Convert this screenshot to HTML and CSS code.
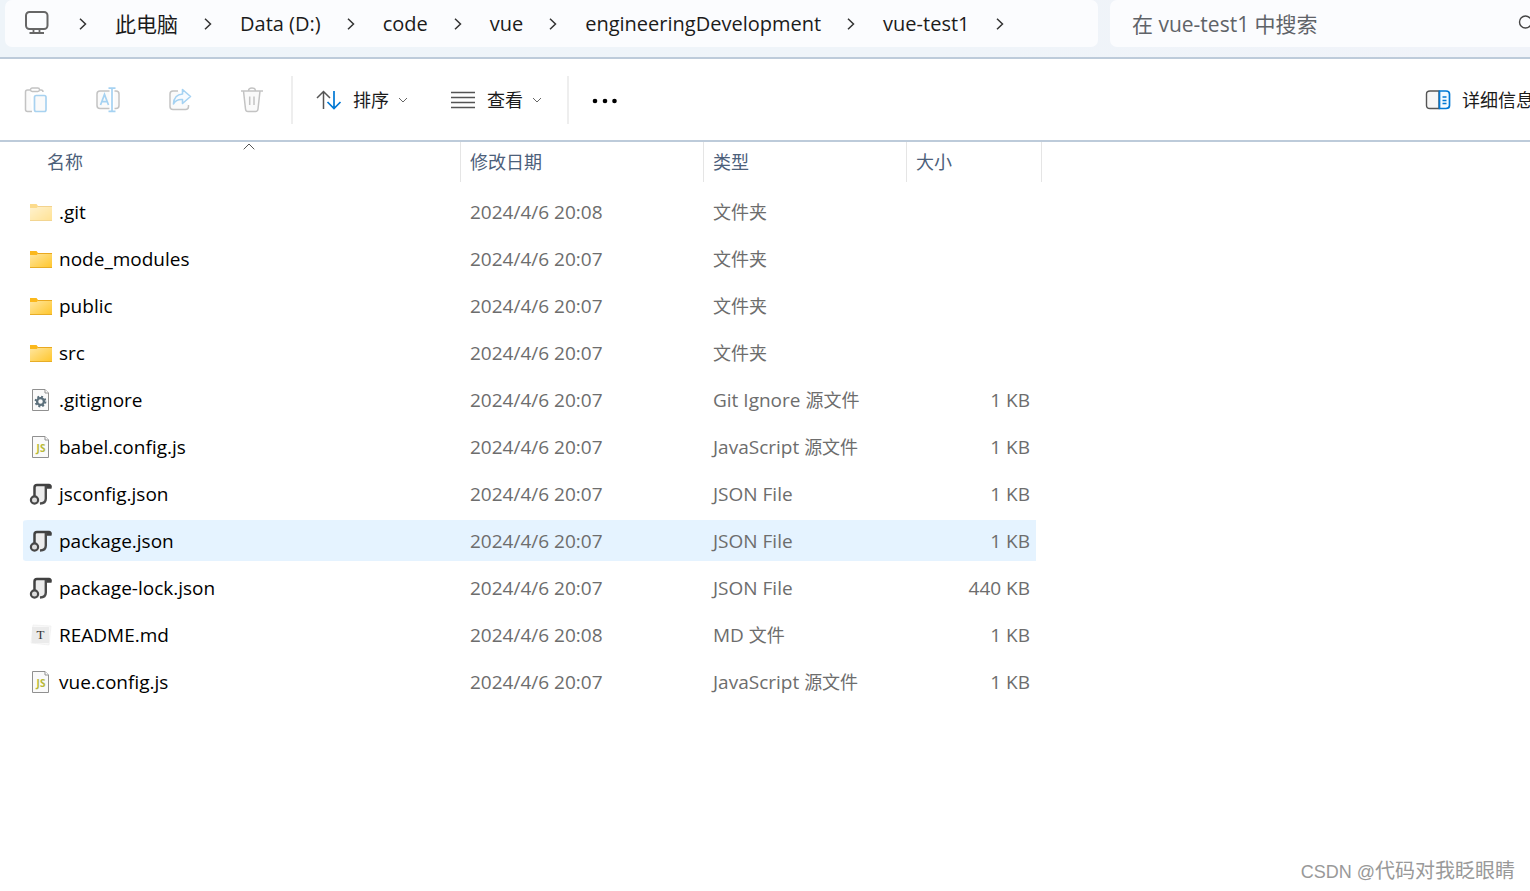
FILE: index.html
```html
<!DOCTYPE html>
<html lang="zh-CN">
<head>
<meta charset="utf-8">
<title>vue-test1</title>
<link rel="stylesheet" href="styles.css">
</head>
<body>
<svg class="defs" aria-hidden="true">
  <defs>
    <linearGradient id="folder-fill" x1="0" y1="0" x2="1" y2="1">
      <stop offset="0" stop-color="#ffe7a2"/><stop offset="1" stop-color="#ffc62c"/>
    </linearGradient>
    <symbol id="chevron" viewBox="0 0 8 12"><path d="M1 .7 6.500 6 1 11.300" fill="none" stroke="#333" stroke-width="1.500"/></symbol>
    <symbol id="caret" viewBox="0 0 10 6"><path d="M1 1l4 4 4-4" fill="none" stroke="#666" stroke-width="1"/></symbol>
    <symbol id="folder" viewBox="0 0 24 24">
      <path d="M1 4h6.500l1.500 2V9H1z" fill="#fbb81b"/>
      <path d="M1 8h6.800l1.700-2H23V20.500H1z" fill="url(#folder-fill)"/>
      <path d="M9 6.500h14" stroke="#e9a820" stroke-width="1"/>
      <path d="M1 20.500h22" stroke="#e7ad27" stroke-width="1"/>
    </symbol>
    <symbol id="page" viewBox="0 0 24 24">
      <path d="M3.500 1.500h12.500l3.500 3.500v17.500h-16z" fill="#fafafa" stroke="#909090"/>
      <path d="M16 1.500V5h3.500" fill="#fff" stroke="#909090"/>
    </symbol>
    <symbol id="gear" viewBox="0 0 24 24">
      <use href="#page"/>
      <circle cx="11.500" cy="13.500" r="4.900" fill="none" stroke="#5b6f7b" stroke-width="2" stroke-dasharray="1.920 1.930"/>
      <circle cx="11.500" cy="13.500" r="3.400" fill="none" stroke="#5b6f7b" stroke-width="2.300"/>
    </symbol>
    <symbol id="js" viewBox="0 0 24 24">
      <use href="#page"/>
      <text x="12" y="17" text-anchor="middle" class="js-mark">JS</text>
    </symbol>
    <symbol id="json" viewBox="0 0 24 24">
      <path d="M6 3h14v3h-4v13l-3 3H8z" fill="#ececec"/>
      <path d="M5.500 14V5.500Q5.500 3 8 3H20Q22 3.500 21.500 5.500H17.300" fill="none" stroke="#414141" stroke-width="2.500"/>
      <path d="M16.800 4V16.500Q16.800 21.500 11 21.500" fill="none" stroke="#4a4a4a" stroke-width="2.400"/>
      <circle cx="5.500" cy="18" r="3.600" fill="#ddd" stroke="#474747" stroke-width="2.200"/>
    </symbol>
    <symbol id="typora" viewBox="0 0 24 24">
      <path d="M4 2l18 1-2 19-18-2z" fill="#f8f8f8" stroke="#ececec" stroke-width=".6"/>
      <path d="M3 4h17v16H3z" fill="#ebebeb"/>
      <text x="11.500" y="16" text-anchor="middle" class="t-mark">T</text>
    </symbol>
  </defs>
</svg>
<header class="address">
  <nav class="crumbs" aria-label="路径">
    <button class="plain pc" aria-label="此电脑图标"><svg width="24" height="24" viewBox="0 0 24 24"><rect x="1" y="1" width="21.500" height="17" rx="3.500" fill="none" stroke="#666" stroke-width="2"/><path d="M8.500 18v3.500M14.500 18v3.500M4.500 22h14.500" fill="none" stroke="#666" stroke-width="1.800"/></svg></button>
    <svg class="chev"><use href="#chevron"/></svg>
    <a href="#" class="zh">此电脑</a>
    <svg class="chev"><use href="#chevron"/></svg>
    <a href="#">Data (D:)</a>
    <svg class="chev"><use href="#chevron"/></svg>
    <a href="#">code</a>
    <svg class="chev"><use href="#chevron"/></svg>
    <a href="#">vue</a>
    <svg class="chev"><use href="#chevron"/></svg>
    <a href="#">engineeringDevelopment</a>
    <svg class="chev"><use href="#chevron"/></svg>
    <a href="#">vue-test1</a>
    <svg class="chev"><use href="#chevron"/></svg>
  </nav>
  <div class="search">
    <input type="text" aria-label="搜索" placeholder="在 vue-test1 中搜索">
    <svg width="20" height="20" viewBox="0 0 20 20"><circle cx="7.500" cy="8" r="6" fill="none" stroke="#444" stroke-width="1.400"/><path d="M12 12.500l6 6" stroke="#444" stroke-width="1.400"/></svg>
  </div>
</header>
<div class="toolbar">
  <div class="group">
    <button class="plain" aria-label="粘贴"><svg width="24" height="26" viewBox="0 0 24 26"><path d="M6 3H3.500Q1.500 3 1.500 5V22.500Q1.500 24.500 3.500 24.500H8M16 3h1q2 0 2 2" fill="#fafafa" stroke="#c3c3c3" stroke-width="1.500"/><rect x="6.500" y="1" width="9" height="3.500" rx="1.700" fill="#fff" stroke="#c3c3c3" stroke-width="1.400"/><rect x="10.500" y="8.500" width="11.500" height="16" rx="1.700" fill="#fafafa" stroke="#a8d2f0" stroke-width="1.700"/></svg></button>
    <button class="plain" aria-label="重命名"><svg width="24" height="26" viewBox="0 0 24 26"><path d="M13.500 21.500H4Q1 21.500 1 18.500V7Q1 4 4 4h9.500M18.500 4H20q3 0 3 3v11.500q0 3-3 3h-1.500" fill="#fafafa" stroke="#c3c3c3" stroke-width="1.500"/><path d="M12.500 1.200h7M12.500 24.300h7M16 1.200v23M4.500 18l4-10.500 4 10.500M6 14.700h5" fill="none" stroke="#a5d2f2" stroke-width="1.700"/></svg></button>
    <button class="plain" aria-label="共享"><svg width="24" height="26" viewBox="0 0 24 26"><path d="M10 4H5Q2 4 2 7v12.500q0 3 3 3h12.500q3 0 3-3V18" fill="#fafafa" stroke="#c3c3c3" stroke-width="1.500"/><path d="M14.500 2.500l8 7-8 7v-4Q8 12 5.500 17q.5-9.500 9-10z" fill="#f7fbff" stroke="#a5d2f2" stroke-width="1.600" stroke-linejoin="round"/></svg></button>
    <button class="plain" aria-label="删除"><svg width="24" height="26" viewBox="0 0 24 26"><path d="M3.500 4l2 18q.3 2.500 2.500 2.500h7.500q2.200 0 2.500-2.500L20 4" fill="#fafafa" stroke="#c3c3c3" stroke-width="1.500"/><path d="M1 4h22M8.500 4Q8.500 1 12 1t3.500 3M9.700 9.500V18M14 9.500V18" fill="none" stroke="#c3c3c3" stroke-width="1.500"/></svg></button>
  </div>
  <button class="plain menu divided"><svg width="26" height="22" viewBox="0 0 26 22"><path d="M7.500 20V2.500M1 9l6.500-6.500L14 9" fill="none" stroke="#555" stroke-width="1.500"/><path d="M18 2v17M11.500 13l6.500 6.500 6.500-6.500" fill="none" stroke="#0078d4" stroke-width="1.700"/></svg><span>排序</span><svg class="caret"><use href="#caret"/></svg></button>
  <button class="plain menu view"><svg width="26" height="22" viewBox="0 0 26 22"><path d="M1 3.500h24M1 8.500h24M1 13.500h24M1 18.500h24" stroke="#555" stroke-width="1.300"/></svg><span>查看</span><svg class="caret"><use href="#caret"/></svg></button>
  <button class="plain more divided" aria-label="更多"><svg width="26" height="8" viewBox="0 0 26 8"><circle cx="3" cy="5" r="2.300"/><circle cx="13" cy="5" r="2.300"/><circle cx="22.500" cy="5" r="2.300"/></svg></button>
  <button class="plain details"><svg width="26" height="22" viewBox="0 0 26 22"><path d="M14 2H5Q1.500 2 1.500 5v11.500q0 3 3.500 3h9z" fill="#f6f6f6" stroke="#555" stroke-width="1.400"/><path d="M14.500 2H21q3.500 0 3.500 3v11.500q0 3-3.500 3h-6.500z" fill="#f3faff" stroke="#0078d4" stroke-width="1.700"/><path d="M17.500 8h4M17.500 11.500h4M17.500 14.500h4" stroke="#0078d4" stroke-width="1.300"/></svg><span>详细信息</span></button>
</div>
<main>
  <table class="files">
    <colgroup><col class="c-name"><col class="c-date"><col class="c-type"><col class="c-size"><col class="c-end"></colgroup>
    <thead><tr>
      <th class="name-head" scope="col">名称<svg class="sort" viewBox="0 0 12 7"><path d="M.7 6.300L6 1l5.300 5.300" fill="none" stroke="#555"/></svg></th>
      <th scope="col">修改日期</th><th scope="col">类型</th><th scope="col" colspan="2">大小</th>
    </tr></thead>
    <tbody>
      <tr><td><span class="file"><svg class="icon faded"><use href="#folder"/></svg>.git</span></td><td>2024/4/6 20:08</td><td class="kind">文件夹</td><td></td><td></td></tr>
      <tr><td><span class="file"><svg class="icon"><use href="#folder"/></svg>node_modules</span></td><td>2024/4/6 20:07</td><td class="kind">文件夹</td><td></td><td></td></tr>
      <tr><td><span class="file"><svg class="icon"><use href="#folder"/></svg>public</span></td><td>2024/4/6 20:07</td><td class="kind">文件夹</td><td></td><td></td></tr>
      <tr><td><span class="file"><svg class="icon"><use href="#folder"/></svg>src</span></td><td>2024/4/6 20:07</td><td class="kind">文件夹</td><td></td><td></td></tr>
      <tr><td><span class="file"><svg class="icon"><use href="#gear"/></svg>.gitignore</span></td><td>2024/4/6 20:07</td><td>Git Ignore <span class="kind">源文件</span></td><td class="size">1 KB</td><td></td></tr>
      <tr><td><span class="file"><svg class="icon"><use href="#js"/></svg>babel.config.js</span></td><td>2024/4/6 20:07</td><td>JavaScript <span class="kind">源文件</span></td><td class="size">1 KB</td><td></td></tr>
      <tr><td><span class="file"><svg class="icon"><use href="#json"/></svg>jsconfig.json</span></td><td>2024/4/6 20:07</td><td>JSON File</td><td class="size">1 KB</td><td></td></tr>
      <tr class="hover"><td><span class="file"><svg class="icon"><use href="#json"/></svg>package.json</span></td><td>2024/4/6 20:07</td><td>JSON File</td><td class="size">1 KB</td><td></td></tr>
      <tr><td><span class="file"><svg class="icon"><use href="#json"/></svg>package-lock.json</span></td><td>2024/4/6 20:07</td><td>JSON File</td><td class="size">440 KB</td><td></td></tr>
      <tr><td><span class="file"><svg class="icon"><use href="#typora"/></svg>README.md</span></td><td>2024/4/6 20:08</td><td>MD <span class="kind">文件</span></td><td class="size">1 KB</td><td></td></tr>
      <tr><td><span class="file"><svg class="icon"><use href="#js"/></svg>vue.config.js</span></td><td>2024/4/6 20:07</td><td>JavaScript <span class="kind">源文件</span></td><td class="size">1 KB</td><td></td></tr>
    </tbody>
  </table>
</main>
<footer><span>CSDN @</span>代码对我眨眼睛</footer>
</body>
</html>
```
FILE: styles.css
```css
* { box-sizing: border-box; }
body {
  margin: 0;
  min-height: 100vh;
  display: flex;
  flex-direction: column;
  overflow-x: hidden;
  background: #fff;
  color: #1b1b1b;
  font: 18px/24px "Open Sans", "Noto Sans CJK SC", sans-serif;
}
svg { flex: none; }
.defs { position: absolute; width: 0; height: 0; }
.plain { display: flex; align-items: center; padding: 0; border: 0; background: none; color: inherit; font: inherit; }

.address {
  display: flex;
  gap: 12px;
  height: 59px;
  padding: 0 0 10px 5px;
  overflow: hidden;
  background: linear-gradient(90deg, #eef4f9, #eff4f9 60%, #f0f3f9);
  border-bottom: 2px solid #bdcbda;
}
.crumbs, .search { display: flex; align-items: center; background: #fbfcfe; border-radius: 7px; }
.crumbs { flex: 0 0 1093px; padding-left: 20px; font-size: 20px; }
.crumbs a { color: #1b1b1b; text-decoration: none; white-space: nowrap; }
.crumbs .zh { font-size: 21px; }
.chev { width: 8px; height: 12px; margin: 0 28px 0 26px; }
.pc { margin: 0 4px 2px 0; }
.search { flex: 1; min-width: 0; margin-right: -8px; padding-left: 22px; }
.search input { flex: 1; min-width: 0; padding: 0; border: 0; outline: 0; background: none; font: inherit; font-size: 21px; line-height: 28px; }
.search input::placeholder { color: #5f6368; opacity: 1; }

.toolbar {
  display: flex;
  align-items: center;
  height: 83px;
  padding-left: 24px;
  overflow: hidden;
  border-bottom: 2px solid #bdcbda;
}
.group { display: flex; gap: 48px; margin-right: 27px; }
.divided { height: 48px; }
.menu.divided { border-left: 2px solid #eee; padding-left: 23px; }
.menu span { margin: 0 9px 0 11px; }
.caret { width: 10px; height: 6px; }
.view { margin-left: 42px; }
.more { margin-left: 25px; padding-left: 23px; border-left: 2px solid #eee; }
.details { margin: 0 -4px 0 auto; gap: 11px; white-space: nowrap; }

main { flex: 1; padding-left: 23px; }
.files { width: 1019px; table-layout: fixed; border-collapse: separate; border-spacing: 0; }
.c-name { width: 438px; }
.c-date { width: 243px; }
.c-type { width: 203px; }
.c-size { width: 129px; }
.c-end { width: 6px; }
.files th { height: 40px; padding: 0 0 0 9px; border-right: 1px solid #e5e5e5; color: #4c607a; font-weight: 400; text-align: left; }
.files .name-head { position: relative; padding-left: 24px; }
.sort { position: absolute; top: 1px; left: 220px; width: 12px; height: 7px; }
.files td { height: 47px; padding: 0 0 0 9px; color: #6d6d6d; font-size: 19px; white-space: nowrap; border: solid #fff; border-width: 3px 0; background: #fff; }
.files td:first-child { padding-left: 6px; color: #000; }
.files .kind { font-size: 18px; }
.files .size { padding: 0 6px 0 0; text-align: right; }
.files .hover td { background: #e5f3ff; }
.files .hover td:first-child { border-radius: 5px 0 0 5px; }
.files .hover td:last-child { background: #fff; }
tbody::before { content: ""; display: block; height: 6px; }
.file { display: flex; align-items: center; gap: 6px; }
.icon { width: 24px; height: 24px; }
.faded { opacity: 0.5; }
.js-mark { font: 700 10px "Open Sans", sans-serif; fill: #b7b936; }
.t-mark { font: 400 13px "Liberation Serif", serif; fill: #333; }

footer { padding: 0 15px 7px; color: #999; font: 20px/24px "Liberation Sans", "Noto Sans CJK SC", sans-serif; text-align: right; }
footer span { font-size: 18px; }
```
